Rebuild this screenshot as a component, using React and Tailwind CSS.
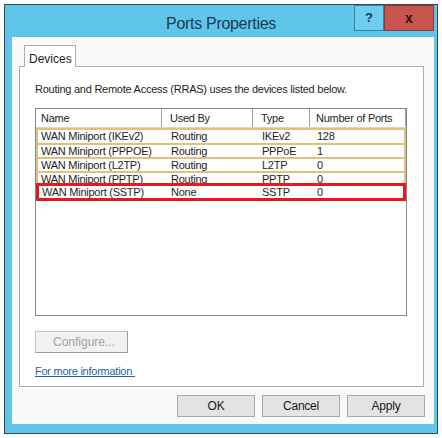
const rows = [
  { name: 'WAN Miniport (IKEv2)', usedBy: 'Routing', type: 'IKEv2', ports: '128', h: 'h-[15px]' },
  { name: 'WAN Miniport (PPPOE)', usedBy: 'Routing', type: 'PPPoE', ports: '1', h: 'h-[14px]' },
  { name: 'WAN Miniport (L2TP)', usedBy: 'Routing', type: 'L2TP', ports: '0', h: 'h-[14px]' },
];

function Cells({ row, first = 'w-[126px]' }) {
  return (
    <>
      <div className={`${first} pl-[3px] truncate`}>{row.name}</div>
      <div className="w-[91px] pl-[7px]">{row.usedBy}</div>
      <div className="w-[57px] pl-[7px]">{row.type}</div>
      <div className="flex-1 pl-[5px]">{row.ports}</div>
    </>
  );
}

function DialogButton({ children }) {
  return (
    <button className="w-[78px] h-[22px] bg-[#e3e3e3] border border-[#a9a9a9] text-[12px] text-[#1a1a1a]">
      {children}
    </button>
  );
}

export default function App() {
  return (
    <div className="w-[442px] h-[438px] bg-white pt-[4px] pl-[4px] font-['Liberation_Sans',Arial,sans-serif]">
      <div className="w-[434px] h-[430px] border border-[#34495c] bg-[#5fc6ea] flex flex-col">
        {/* Title bar */}
        <div className="h-[32px] grid grid-cols-[1fr_auto_1fr]">
          <div />
          <div className="pt-[7px] text-[16px] tracking-[-0.3px] text-[#1f3a57]">Ports Properties</div>
          <div className="flex justify-end pr-[3px]">
            <div className="w-[30px] h-[26px] border border-[#3d7fa6] bg-[#6fcdee] flex items-center justify-center text-[13px] font-bold text-[#1c3550]">
              ?
            </div>
            <div className="w-[50px] h-[26px] bg-[#c9544d] border border-[#8a3a36] flex items-center justify-center text-[14px] font-bold text-[#2a1414]">
              x
            </div>
          </div>
        </div>

        {/* Client area */}
        <div className="ml-[7px] mr-[3px] h-[387px] bg-[#f9f9f9] pt-[8px] pl-[7px] text-[11px] tracking-[-0.25px] text-[#1e1e1e]">
          {/* Tab */}
          <div className="ml-[5px] w-[52px] h-[22px] -mb-px relative border border-b-0 border-[#adadad] bg-white pl-[4px] pt-[4px] text-[12px] tracking-normal">
            Devices
          </div>

          {/* Tab panel */}
          <div className="w-[405px] h-[321px] border border-[#adadad] bg-white pl-[15px] pt-[15px]">
            <div className="leading-[14px]">Routing and Remote Access (RRAS) uses the devices listed below.</div>

            {/* List view */}
            <div className="mt-[12px] w-[372px] h-[208px] border border-[#828790] bg-white">
              <div className="h-[19px] flex items-center border-b border-[#d5d5d5]">
                <div className="w-[126px] h-full pl-[5px] flex items-center border-r border-[#a0a0a0]">Name</div>
                <div className="w-[91px] h-full pl-[8px] flex items-center border-r border-[#a0a0a0]">Used By</div>
                <div className="w-[57px] h-full pl-[8px] flex items-center border-r border-[#a0a0a0]">Type</div>
                <div className="flex-1 h-full pl-[6px] flex items-center border-r border-[#a0a0a0]">Number of Ports</div>
              </div>
              {rows.map((row) => (
                <div
                  key={row.name}
                  className={`${row.h} flex items-center leading-[13px] border-x-2 border-t-2 border-[#e3bf7c]`}
                >
                  <Cells row={row} />
                </div>
              ))}
              {/* partly hidden row under the highlight */}
              <div className="h-[12px] flex items-start leading-[13px] overflow-hidden border-x-2 border-t-2 border-[#e3bf7c]">
                <Cells row={{ name: 'WAN Miniport (PPTP)', usedBy: 'Routing', type: 'PPTP', ports: '0' }} />
              </div>
              {/* highlighted row */}
              <div className="w-[370px] h-[18px] flex items-center leading-[14px] border-[3px] border-[#e31b1b]">
                <Cells
                  first="w-[125px]"
                  row={{ name: 'WAN Miniport (SSTP)', usedBy: 'None', type: 'SSTP', ports: '0' }}
                />
              </div>
            </div>

            <button className="mt-[15px] w-[93px] h-[22px] bg-[#f1f1f1] border border-[#c6c6c6] border-b-[#9e9e9e] border-r-[#9e9e9e] text-[12px] tracking-normal text-[#a3a3a3] text-left pl-[17px]">
              Configure...
            </button>

            <div className="mt-[10px]">
              <a className="text-[#1f5ea8] underline leading-[14px] whitespace-pre">For more information </a>
            </div>
          </div>

          {/* Dialog buttons */}
          <div className="mt-[8px] pr-[9px] flex justify-end gap-[7px]">
            <DialogButton>OK</DialogButton>
            <DialogButton>Cancel</DialogButton>
            <DialogButton>Apply</DialogButton>
          </div>
        </div>
      </div>
    </div>
  );
}
